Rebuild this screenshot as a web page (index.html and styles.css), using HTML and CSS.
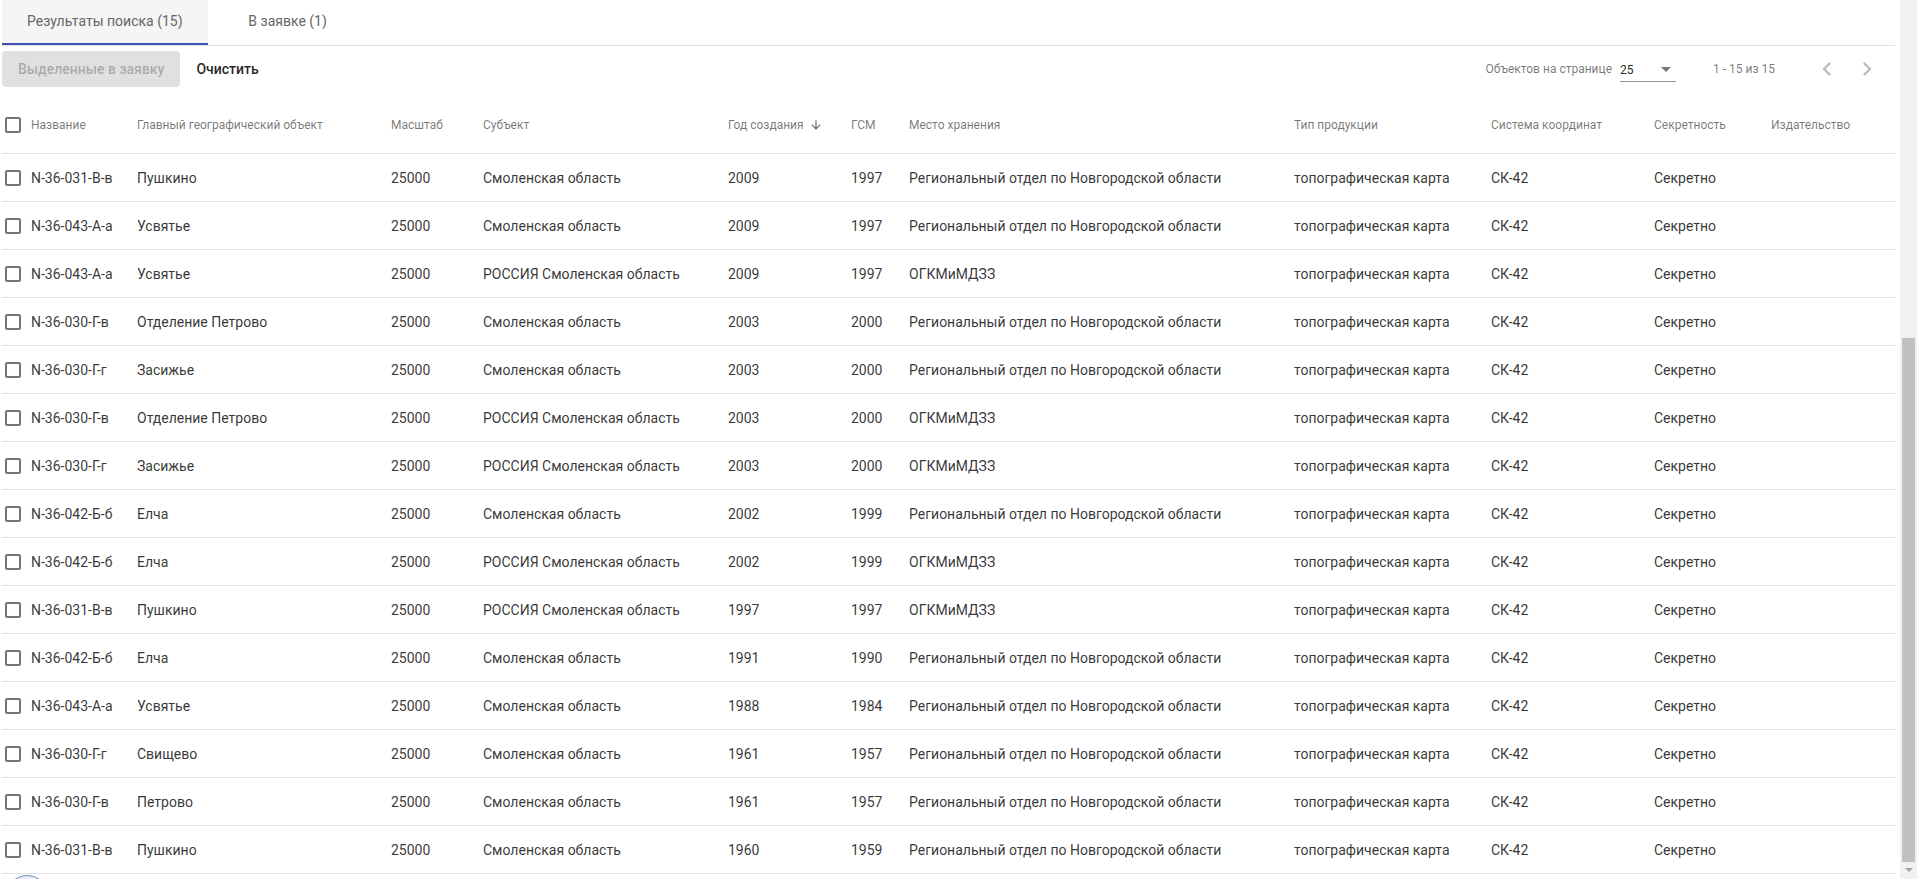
FILE: index.html
```html
<!DOCTYPE html>
<html lang="ru">
<head>
  <meta charset="UTF-8" />
  <meta name="viewport" content="width=device-width, initial-scale=1.0"/>
  <title>Результаты поиска</title>
  <link rel="stylesheet" href="styles.css">
</head>
<body>
  <div class="layout">
    <div class="page">
      <div class="tabs">
        <div class="tab active">Результаты поиска (15)</div>
        <div class="tab">В заявке (1)</div>
      </div>

      <div class="toolbar">
        <button class="btn btn-raised" disabled>Выделенные в заявку</button>
        <button class="btn btn-flat">Очистить</button>

        <div class="paginator">
          <span class="pg-label">Объектов на странице</span>
          <div class="pg-select">
            <span>25</span>
            <span class="pg-arrow"></span>
          </div>
          <span class="pg-range">1 - 15 из 15</span>
          <button class="icon-btn" disabled>
            <svg viewBox="0 0 24 24" width="28" height="28"><path d="M15.41 7.41L14 6l-6 6 6 6 1.41-1.41L10.83 12z"/></svg>
          </button>
          <button class="icon-btn" disabled>
            <svg viewBox="0 0 24 24" width="28" height="28"><path d="M10 6L8.59 7.41 13.17 12l-4.58 4.59L10 18l6-6z"/></svg>
          </button>
        </div>
      </div>

      <div class="table">
        <div class="row head">
          <div class="cell"><span class="checkbox"></span></div>
          <div class="cell">Название</div>
          <div class="cell">Главный географический объект</div>
          <div class="cell">Масштаб</div>
          <div class="cell">Субъект</div>
          <div class="cell sorted">Год создания
            <svg viewBox="0 0 24 24" width="14" height="14"><path d="M20 12l-1.41-1.41L13 16.17V4h-2v12.17l-5.58-5.59L4 12l8 8 8-8z"/></svg>
          </div>
          <div class="cell">ГСМ</div>
          <div class="cell">Место хранения</div>
          <div class="cell">Тип продукции</div>
          <div class="cell">Система координат</div>
          <div class="cell">Секретность</div>
          <div class="cell">Издательство</div>
        </div>
        <div id="rows"></div>
      </div>

      <div class="fab"></div>
    </div>

    <div class="scrollbar">
      <div class="thumb"></div>
      <div class="sb-down"></div>
    </div>
  </div>

  <script>
    const REG = 'Региональный отдел по Новгородской области';
    const OGK = 'ОГКМиМДЗЗ';
    const SMOL = 'Смоленская область';
    const RU_SMOL = 'РОССИЯ Смоленская область';

    const data = [
      ['N-36-031-В-в', 'Пушкино', SMOL, '2009', '1997', REG],
      ['N-36-043-А-а', 'Усвятье', SMOL, '2009', '1997', REG],
      ['N-36-043-А-а', 'Усвятье', RU_SMOL, '2009', '1997', OGK],
      ['N-36-030-Г-в', 'Отделение Петрово', SMOL, '2003', '2000', REG],
      ['N-36-030-Г-г', 'Засижье', SMOL, '2003', '2000', REG],
      ['N-36-030-Г-в', 'Отделение Петрово', RU_SMOL, '2003', '2000', OGK],
      ['N-36-030-Г-г', 'Засижье', RU_SMOL, '2003', '2000', OGK],
      ['N-36-042-Б-б', 'Елча', SMOL, '2002', '1999', REG],
      ['N-36-042-Б-б', 'Елча', RU_SMOL, '2002', '1999', OGK],
      ['N-36-031-В-в', 'Пушкино', RU_SMOL, '1997', '1997', OGK],
      ['N-36-042-Б-б', 'Елча', SMOL, '1991', '1990', REG],
      ['N-36-043-А-а', 'Усвятье', SMOL, '1988', '1984', REG],
      ['N-36-030-Г-г', 'Свищево', SMOL, '1961', '1957', REG],
      ['N-36-030-Г-в', 'Петрово', SMOL, '1961', '1957', REG],
      ['N-36-031-В-в', 'Пушкино', SMOL, '1960', '1959', REG]
    ];

    const rows = document.getElementById('rows');

    data.forEach(([name, geo, subj, year, gsm, store]) => {
      const cells = [name, geo, '25000', subj, year, gsm, store, 'топографическая карта', 'СК-42', 'Секретно', ''];
      const row = document.createElement('div');
      row.className = 'row';
      row.innerHTML = '<div class="cell"><span class="checkbox"></span></div>' +
        cells.map(c => `<div class="cell">${c}</div>`).join('');
      rows.appendChild(row);
    });
  </script>
</body>
</html>
```

FILE: styles.css
```css
* {
  box-sizing: border-box;
  margin: 0;
  padding: 0;
}

body {
  background: #fff;
  color: rgba(0, 0, 0, 0.87);
  font-family: Roboto, 'Liberation Sans', Arial, sans-serif;
  height: 879px;
  overflow: hidden;
}

.layout {
  display: flex;
  height: 879px;
}

.page {
  flex: 1;
  padding: 0 5px 0 2px;
  overflow: hidden;
}

/* tabs */
.tabs {
  display: flex;
  border-bottom: 1px solid #e0e0e0;
}

.tab {
  height: 45px;
  min-width: 160px;
  padding: 0 25px 3px;
  display: flex;
  align-items: center;
  justify-content: center;
  font-size: 14px;
  color: #666;
}

.tab.active {
  background: #f5f5f5;
  border-bottom: 2px solid #3f51b5;
  padding-bottom: 1px;
}

/* toolbar */
.toolbar {
  display: flex;
  align-items: center;
  height: 36px;
  margin: 5px 0 10px;
}

.btn {
  height: 36px;
  padding: 0 16px;
  border: none;
  border-radius: 4px;
  font-family: inherit;
  font-size: 14px;
  font-weight: 500;
  background: transparent;
  cursor: pointer;
}

.btn-raised {
  background: #e0e0e0;
  color: rgba(0, 0, 0, 0.26);
  cursor: default;
}

.btn-flat {
  color: rgba(0, 0, 0, 0.87);
}

.paginator {
  margin-left: auto;
  display: flex;
  align-items: center;
  font-size: 12px;
  color: rgba(0, 0, 0, 0.54);
  padding-right: 8px;
}

.pg-label {
  margin-right: 8px;
}

.pg-select {
  width: 56px;
  height: 24px;
  margin-top: 2px;
  display: flex;
  align-items: center;
  justify-content: space-between;
  padding-right: 5px;
  border-bottom: 1px solid rgba(0, 0, 0, 0.42);
  color: rgba(0, 0, 0, 0.87);
}

.pg-arrow {
  width: 0;
  height: 0;
  border-left: 5px solid transparent;
  border-right: 5px solid transparent;
  border-top: 5px solid rgba(0, 0, 0, 0.54);
}

.pg-range {
  margin: 0 32px 0 37px;
}

.icon-btn {
  width: 40px;
  height: 40px;
  border: none;
  background: transparent;
  display: flex;
  align-items: center;
  justify-content: center;
}

.icon-btn svg {
  fill: rgba(0, 0, 0, 0.26);
}

/* table */
.row {
  display: grid;
  grid-template-columns: 29px 106px 254px 92px 245px 123px 58px 385px 197px 163px 117px 124px;
  align-items: center;
  height: 48px;
  border-bottom: 1px solid #e0e0e0;
  font-size: 14px;
  color: rgba(0, 0, 0, 0.8);
}

.row.head {
  height: 57px;
  font-size: 12px;
  color: rgba(0, 0, 0, 0.54);
}

.cell {
  white-space: nowrap;
  display: flex;
  align-items: center;
}

.sorted svg {
  margin-left: 5px;
  fill: rgba(0, 0, 0, 0.6);
}

.checkbox {
  width: 16px;
  height: 16px;
  margin-left: 3px;
  border: 2px solid rgba(0, 0, 0, 0.54);
  border-radius: 2px;
}

.fab {
  width: 42px;
  height: 42px;
  margin: 1px 0 0 4px;
  border-radius: 50%;
  border: 1.5px solid #6d8fbf;
  background: #e9eff7;
}

/* scrollbar */
.scrollbar {
  width: 17px;
  background: #f1f1f1;
  display: flex;
  flex-direction: column;
}

.thumb {
  height: 524px;
  margin: 338px 2px 0;
  background: #c1c1c1;
}

.sb-down {
  flex: 1;
  display: flex;
  justify-content: center;
  padding-top: 6px;
}

.sb-down::before {
  content: '';
  width: 0;
  height: 0;
  border-left: 4px solid transparent;
  border-right: 4px solid transparent;
  border-top: 4px solid #a3a3a3;
}
```
